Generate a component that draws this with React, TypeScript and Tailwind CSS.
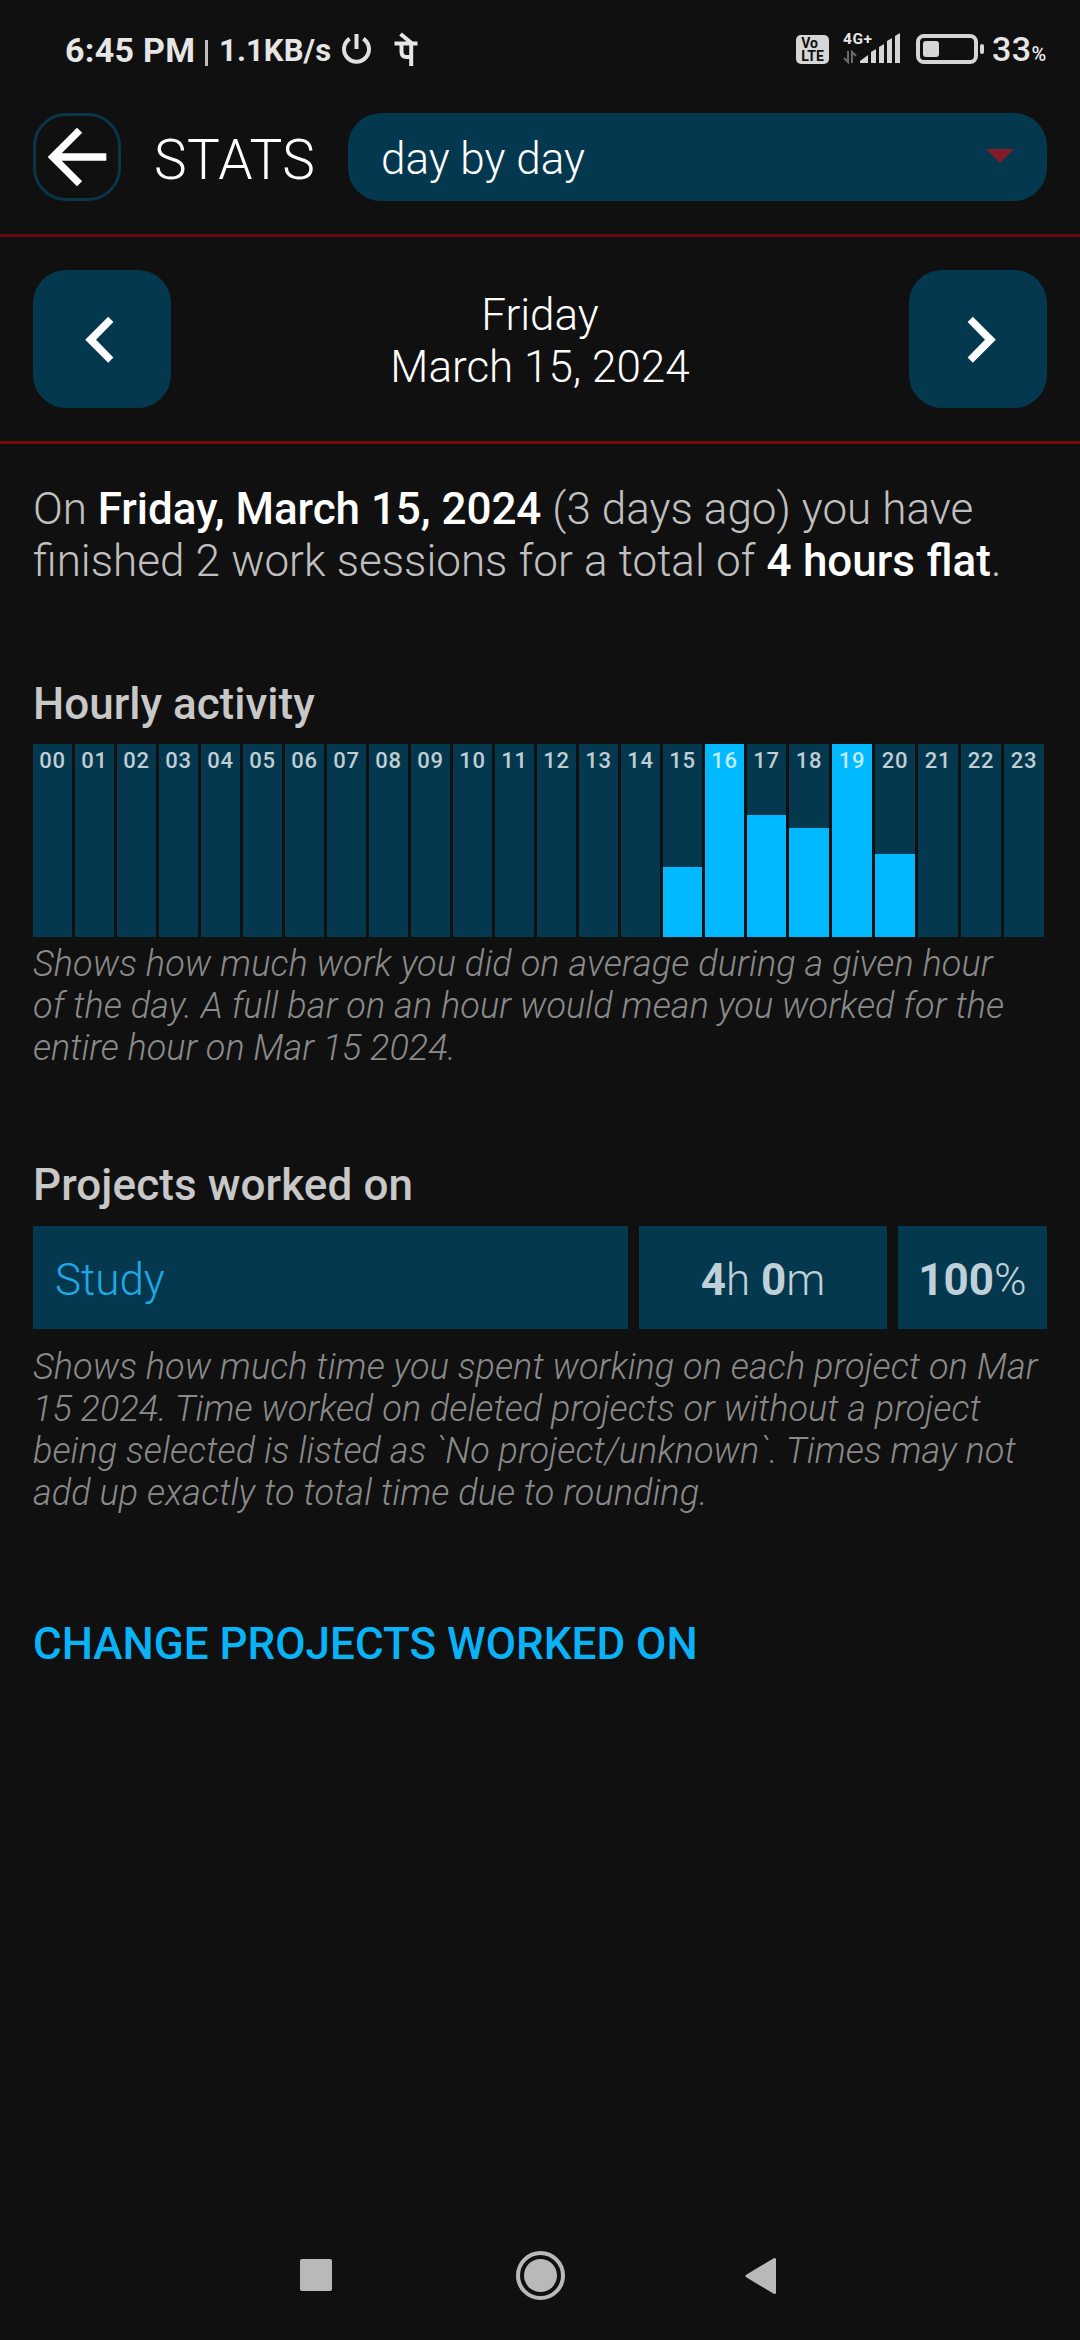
const hours = Array.from({ length: 24 }, (_, i) => i);
const activity: Record<number, number> = { 15: 70, 16: 193, 17: 122, 18: 109, 19: 193, 20: 83 };

function StatusBar() {
  return (
    <header className="flex h-[100px] items-start text-[#e6e6e6]">
      <div className="flex h-[100px] w-[540px] items-start pl-[65px]">
        <div className="mt-[30px] w-[140px] whitespace-nowrap text-[34px] leading-[40px] font-bold tracking-[0.3px]">6:45 PM</div>
        <div className="mt-[40px] h-[26px] w-[3px] bg-[#bdbdbd]" />
        <div className="mt-[31px] ml-[11px] w-[121px] whitespace-nowrap text-[31px] leading-[40px] font-bold tracking-[0.1px]">1.1KB/s</div>
        <svg className="mt-[33px]" width="32" height="32" viewBox="0 0 32 32" fill="none" stroke="#e0e0e0" strokeWidth="4">
          <path d="M9.7 5.7a12.5 12.5 0 1 0 13.6 0M16.5 1v15" />
        </svg>
        <svg className="mt-[30px] ml-[20px]" width="28" height="38" viewBox="0 0 28 38" fill="none" stroke="#e6e6e6" strokeWidth="4">
          <path d="M2.5 13.5h23M8.5 4l11 9M9.5 13.5v8q0 5.5 5 5.5h5M19.2 13.5v22.5" />
        </svg>
      </div>
      <div className="flex h-[100px] items-start pl-[256px]">
        <div className="mt-[35px] flex h-[29px] w-[33px] flex-col items-center justify-center rounded-[5px] bg-[#d6d6d6] text-[14px] leading-[13px] font-bold text-[#101010]">
          <span className="-ml-[6px] block">Vo</span>
          <span className="block">LTE</span>
        </div>
        <svg className="mt-[30px] ml-[14px]" width="60" height="36" viewBox="0 0 60 36">
          <text x="0" y="14" fontSize="15.5" fontWeight="700" fill="#e6e6e6" fontFamily="Roboto" textLength="29">4G+</text>
          <path d="M5 21v11L1 28M9 33V22l4 4" fill="none" stroke="#6a6a6a" strokeWidth="2" />
          <path d="M17 33v-2l8-6v8zM28 33V22l5-3v14zM36 33V17l5-3v19zM44 33V11l5-3v25zM52 33V6l5-3v30z" fill="#d6d6d6" />
        </svg>
        <svg className="mt-[33px] ml-[12px]" width="70" height="32" viewBox="0 0 70 32">
          <rect x="3" y="3" width="58" height="26" rx="6" fill="none" stroke="#d6d6d6" strokeWidth="4" />
          <rect x="8" y="8" width="16" height="16" rx="3" fill="#d6d6d6" />
          <rect x="65" y="11" width="4" height="10" rx="2" fill="#d6d6d6" />
        </svg>
        <div className="mt-[29px] ml-[7px] flex items-baseline whitespace-nowrap leading-[40px] font-medium">
          <span className="text-[34px] tracking-[0.4px]">33</span>
          <span className="text-[20px]">%</span>
        </div>
      </div>
    </header>
  );
}

function TopBar() {
  return (
    <div className="flex h-[137px] items-start border-b-3 border-[#650b0b] px-[33px] pt-[13px] text-white">
      <button className="flex h-[88px] w-[88px] items-center justify-center rounded-[33px] border-3 border-[#0b3548]">
        <svg className="h-[88px] w-[88px] shrink-0" viewBox="0 0 24 24" fill="#ffffff">
          <path d="M20 11H7.83l5.59-5.59L12 4l-8 8 8 8 1.41-1.41L7.83 13H20v-2z" />
        </svg>
      </button>
      <h1 className="ml-[33px] w-[194px] text-[55px] leading-[95px] font-light tracking-[0.4px]">STATS</h1>
      <div className="flex h-[88px] w-[699px] items-center justify-between rounded-[33px] bg-[#04384e] pr-[33px] pl-[33px]">
        <span className="mt-[3px] text-[44px] leading-[52px] font-light">day by day</span>
        <svg className="-mt-[2px]" width="28" height="14" viewBox="0 0 28 14">
          <path d="M0 0h28L14 14z" fill="#821c26" />
        </svg>
      </div>
    </div>
  );
}

function DayPicker() {
  return (
    <div className="flex h-[207px] items-start justify-between border-b-3 border-[#700c0c] px-[33px] pt-[33px] text-white">
      <button className="h-[138px] w-[138px] rounded-[33px] bg-[#04384e]">
        <svg width="138" height="138" viewBox="0 0 138 138" fill="#ffffff">
          <path d="M75.2 46.7l5.2 5.3L63 69.7l17.4 17.7-5.2 5.3-23-23z" />
        </svg>
      </button>
      <div className="mt-[19px] text-center text-[44px] leading-[52px] font-light">
        <div>Friday</div>
        <div>March 15, 2024</div>
      </div>
      <button className="h-[138px] w-[138px] rounded-[33px] bg-[#04384e]">
        <svg width="138" height="138" viewBox="0 0 138 138" fill="#ffffff">
          <path d="M63.8 46.7l-5.2 5.3L76 69.7 58.6 87.4l5.2 5.3 23-23z" />
        </svg>
      </button>
    </div>
  );
}

function HourlyChart() {
  return (
    <div className="mt-[14px] flex h-[193px] gap-[3px]">
      {hours.map((h) => (
        <div key={h} className={`relative flex h-full flex-col justify-end bg-[#04384e] ${h < 18 ? "w-[39px]" : "w-[40px]"}`}>
          <div className="bg-[#00b9ff]" style={{ height: activity[h] ?? 0 }} />
          <span className="absolute inset-x-0 top-[4px] text-center text-[22px] leading-[26px] font-medium tracking-[0.8px] text-white/75">
            {String(h).padStart(2, "0")}
          </span>
        </div>
      ))}
    </div>
  );
}

function NavBar() {
  return (
    <nav className="mt-auto flex h-[130px] items-start pt-[41px]">
      <div className="mt-[8px] ml-[300px] h-[32px] w-[32px] rounded-[2px] bg-[#b9b9b9]" />
      <svg className="ml-[184px]" width="49" height="49" viewBox="0 0 49 49">
        <circle cx="24.5" cy="24.5" r="22.5" fill="none" stroke="#b9b9b9" strokeWidth="4" />
        <circle cx="24.5" cy="24.5" r="16.5" fill="#b9b9b9" />
      </svg>
      <svg className="mt-[6px] ml-[179px]" width="33" height="38" viewBox="0 0 33 38">
        <path d="M30.5 2.5v33L3 19z" fill="#b9b9b9" stroke="#b9b9b9" strokeWidth="3" strokeLinejoin="round" />
      </svg>
    </nav>
  );
}

export default function App() {
  return (
    <div className="flex h-[2340px] w-[1080px] flex-col overflow-hidden bg-[#101010] font-['Roboto',sans-serif]">
      <StatusBar />
      <TopBar />
      <DayPicker />
      <main className="px-[33px] text-[#c0c0c0]">
        <p className="mt-[39px] text-[44px] leading-[52px] font-light whitespace-nowrap">
          On <b className="font-medium tracking-[-0.05px] text-white">Friday, March 15, 2024</b>
          <span className="[word-spacing:0.3px]"> (3 days ago) you have</span>
          <br />
          <span className="[word-spacing:0.5px]">
            finished 2 work sessions for a total of <b className="font-medium text-white">4 hours flat</b>.
          </span>
        </p>
        <h2 className="mt-[91px] text-[44px] leading-[52px] font-medium text-[#c8c8c8]">Hourly activity</h2>
        <HourlyChart />
        <p className="mt-[6px] text-[36px] leading-[42px] font-light tracking-[0.11px] whitespace-nowrap text-[#8a8a8a] italic">
          Shows how much work you did on average during a given hour
          <br />
          of the day. A full bar on an hour would mean you worked for the
          <br />
          <span className="tracking-normal">entire hour on Mar 15 2024.</span>
        </p>
        <h2 className="mt-[90px] text-[44px] leading-[52px] font-medium tracking-[0.1px] text-[#c8c8c8]">Projects worked on</h2>
        <div className="mt-[15px] flex h-[103px] gap-[11px] text-[44px] leading-[52px] font-light text-[#bfd0d8]">
          <div className="flex w-[595px] items-center bg-[#04384e] pt-[4px] pl-[22px] text-[#1ea9e6]">Study</div>
          <div className="flex w-[248px] items-center justify-center bg-[#04384e] pt-[4px]">
            <span>
              <b className="font-bold">4</b>h <b className="font-bold">0</b>m
            </span>
          </div>
          <div className="flex w-[149px] items-center justify-center bg-[#04384e] pt-[4px]">
            <span>
              <b className="font-bold">100</b>%
            </span>
          </div>
        </div>
        <p className="mt-[17px] text-[36px] leading-[42px] font-light tracking-[0.09px] whitespace-nowrap text-[#8a8a8a] italic">
          Shows how much time you spent working on each project on Mar
          <br />
          <span className="tracking-[0.05px]">15 2024. Time worked on deleted projects or without a project</span>
          <br />
          being selected is listed as `No project/unknown`. Times may not
          <br />
          add up exactly to total time due to rounding.
        </p>
        <a className="mt-[104px] block text-[44px] leading-[52px] font-medium whitespace-nowrap text-[#08b3f7]">
          CHANGE PROJECTS WORKED ON
        </a>
      </main>
      <NavBar />
    </div>
  );
}
